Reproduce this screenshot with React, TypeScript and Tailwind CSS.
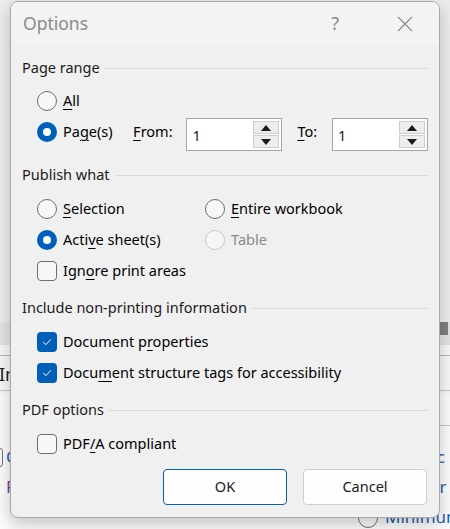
import type { ReactNode } from 'react';

const font = { fontFamily: '"Segoe UI", "Noto Sans", sans-serif' };

function U({ children }: { children: ReactNode }) {
  return <span className="underline underline-offset-[3px] decoration-1">{children}</span>;
}

function Header({ children }: { children: ReactNode }) {
  return (
    <div className="flex h-[20px] items-center gap-[5px]">
      <span className="whitespace-nowrap text-[#1b1b1b]">{children}</span>
      <div className="h-px flex-1 bg-[#dadada]" />
    </div>
  );
}

function Radio({ checked, disabled }: { checked?: boolean; disabled?: boolean }) {
  if (checked) {
    return (
      <span className="flex h-[20px] w-[20px] shrink-0 items-center justify-center rounded-full bg-[#005fb8]">
        <span className="h-[8px] w-[8px] rounded-full bg-white" />
      </span>
    );
  }
  return (
    <span
      className={
        disabled
          ? 'h-[20px] w-[20px] shrink-0 rounded-full border border-[#c8c8c8] bg-[#f6f6f6]'
          : 'h-[20px] w-[20px] shrink-0 rounded-full border border-[#6e6e6e] bg-[#f7f7f7]'
      }
    />
  );
}

function Check({ checked }: { checked?: boolean }) {
  if (checked) {
    return (
      <span className="flex h-[20px] w-[20px] shrink-0 items-center justify-center rounded-[4px] bg-[#005fb8]">
        <svg width="12" height="12" viewBox="0 0 12 12" fill="none">
          <path d="M2.5 6.3 L5 8.6 L9.6 3.6" stroke="white" strokeWidth="1" strokeLinecap="round" strokeLinejoin="round" />
        </svg>
      </span>
    );
  }
  return <span className="h-[20px] w-[20px] shrink-0 rounded-[4px] border border-[#6e6e6e] bg-[#f7f7f7]" />;
}

function Spin() {
  return (
    <div className="flex h-[33px] w-[96px] items-stretch border border-[#a5a5a5] bg-white p-[2px]">
      <span className="flex-1 pl-[3px] pt-[4px] text-[#1b1b1b]">1</span>
      <div className="flex w-[26px] flex-col gap-px">
        <div className="flex flex-1 items-center justify-center border border-[#cfcfcf] bg-[#ededed]">
          <svg width="10" height="6" viewBox="0 0 10 6"><path d="M0 6 L5 0 L10 6 Z" fill="#1b1b1b" /></svg>
        </div>
        <div className="flex flex-1 items-center justify-center border border-[#cfcfcf] bg-[#ededed]">
          <svg width="10" height="6" viewBox="0 0 10 6"><path d="M0 0 L10 0 L5 6 Z" fill="#1b1b1b" /></svg>
        </div>
      </div>
    </div>
  );
}

function Row({ children }: { children: ReactNode }) {
  return <div className="flex h-[31px] items-center">{children}</div>;
}

export default function App() {
  return (
    <div className="relative h-[529px] w-[450px] overflow-hidden bg-[#ececec] text-[14.5px]" style={font}>
      {/* app behind the dialog */}
      <div className="absolute inset-x-0 top-[322px] h-[23px] bg-[#e3e3e3]" />
      <div className="absolute right-[2px] top-[322px] h-[13px] w-[10px] bg-[#7f7f7f]" />
      <div className="absolute inset-x-0 top-[345px] h-[184px] bg-[#f7f7f7]" />
      <div className="absolute inset-x-0 top-[355px] h-px bg-[#b3b3b3]" />
      <div className="absolute inset-x-0 top-[390px] h-px bg-[#c6c6c6]" />
      <div className="absolute inset-x-0 top-[395px] h-[134px] bg-[#fbfbfb]" />
      <div className="absolute right-0 top-[425px] h-px w-[20px] bg-[#c6c6c6]" />
      <span className="absolute left-[-1px] top-[361px] text-[18px] text-[#1b1b1b]">In</span>
      <span className="absolute left-[-12px] top-[448px] h-[19px] w-[15px] rounded-[3px] border border-[#6e6e6e]" />
      <span className="absolute left-[6px] top-[444px] text-[17px] text-[#1d5fb0]">C</span>
      <span className="absolute left-[6px] top-[474px] text-[17px] text-[#6b3fa0]">F</span>
      <span className="absolute left-[430px] top-[444px] text-[17px] text-[#1d5fb0]">rc</span>
      <span className="absolute left-[430px] top-[474px] text-[17px] text-[#1d5fb0]">ar</span>
      <span className="absolute left-[358px] top-[508px] h-[20px] w-[20px] rounded-full border border-[#6e6e6e]" />
      <span className="absolute left-[385px] top-[506px] text-[17px] leading-[22px] text-[#1d5fb0]">Minimum</span>

      {/* dialog */}
      <div className="absolute left-[10px] top-[1px] flex h-[517px] w-[430px] flex-col overflow-hidden rounded-[8px] border border-[#a9a9a9] bg-[#f0f0f0] shadow-[0_6px_16px_rgba(0,0,0,0.22)]">
        <div className="flex h-[43px] shrink-0 items-center bg-[#f3f3f3] pl-[12px] pr-[26px]">
          <span className="flex-1 text-[17.5px] text-[#8a8a8a]">Options</span>
          <span className="mr-[58px] text-[18px] text-[#8a8a8a]">?</span>
          <svg width="16" height="16" viewBox="0 0 16 16">
            <path d="M1 1 L15 15 M15 1 L1 15" stroke="#8a8a8a" strokeWidth="1.2" />
          </svg>
        </div>

        <div className="flex flex-1 flex-col px-[11px] pt-[13px]">
          <Header>Page range</Header>
          <div className="mt-[7px] pl-[15px]">
            <Row>
              <Radio />
              <span className="ml-[6px]"><U>A</U>ll</span>
            </Row>
            <Row>
              <Radio checked />
              <span className="ml-[6px] w-[71px]">Pa<U>g</U>e(s)</span>
              <span className="w-[54px]"><U>F</U>rom:</span>
              <div className="mt-[6px]"><Spin /></div>
              <span className="ml-[15px] w-[35px]"><U>T</U>o:</span>
              <div className="mt-[6px]"><Spin /></div>
            </Row>
          </div>

          <div className="mt-[18px]">
            <Header>Publish what</Header>
          </div>
          <div className="mt-[8px] pl-[15px]">
            <Row>
              <div className="flex w-[168px] items-center">
                <Radio />
                <span className="ml-[6px]"><U>S</U>election</span>
              </div>
              <Radio />
              <span className="ml-[6px]"><U>E</U>ntire workbook</span>
            </Row>
            <Row>
              <div className="flex w-[168px] items-center">
                <Radio checked />
                <span className="ml-[6px]">Acti<U>v</U>e sheet(s)</span>
              </div>
              <Radio disabled />
              <span className="ml-[6px] text-[#8a8a8a]">Table</span>
            </Row>
            <Row>
              <Check />
              <span className="ml-[6px]">Ign<U>o</U>re print areas</span>
            </Row>
          </div>

          <div className="mt-[12px]">
            <Header>Include non-printing information</Header>
          </div>
          <div className="mt-[8px] pl-[15px]">
            <Row>
              <Check checked />
              <span className="ml-[6px]">Document p<U>r</U>operties</span>
            </Row>
            <Row>
              <Check checked />
              <span className="ml-[6px]">Docu<U>m</U>ent structure tags for accessibility</span>
            </Row>
          </div>

          <div className="mt-[12px]">
            <Header>PDF options</Header>
          </div>
          <div className="mt-[8px] pl-[15px]">
            <Row>
              <Check />
              <span className="ml-[6px]">PDF<U>/</U>A compliant</span>
            </Row>
          </div>

          <div className="mt-[10px] flex justify-end gap-[16px] pr-[1px]">
            <button className="h-[36px] w-[124px] rounded-[4px] border border-[#005fb8] bg-[#fdfdfd] text-[#1b1b1b]">OK</button>
            <button className="h-[36px] w-[124px] rounded-[4px] border border-[#d0d0d0] bg-[#fdfdfd] text-[#1b1b1b]">Cancel</button>
          </div>
        </div>
      </div>
    </div>
  );
}
